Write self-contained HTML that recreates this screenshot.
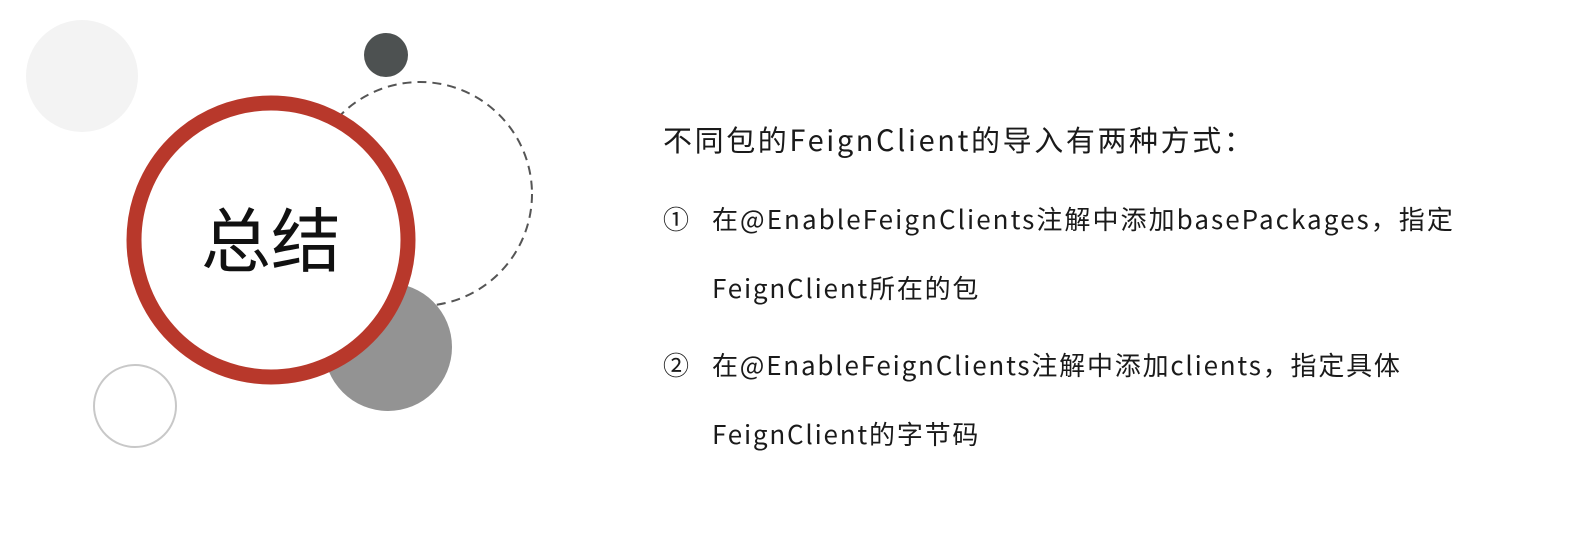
<!DOCTYPE html>
<html><head><meta charset="utf-8"><style>
html,body{margin:0;padding:0;width:1573px;height:543px;background:#fff;overflow:hidden;font-family:"Noto Sans CJK SC","Liberation Sans",sans-serif;color:#1a1a1a}
.t{position:absolute;white-space:nowrap;font-size:26px;line-height:32px;letter-spacing:1.8px}
.n{position:absolute;font-size:26px;line-height:32px}
</style></head><body>
<svg width="1573" height="543" style="position:absolute;left:0;top:0">
<circle cx="82" cy="76" r="56" fill="#f3f3f3"/>
<circle cx="386" cy="55" r="22" fill="#4d5151"/>
<circle cx="420" cy="194" r="112" fill="none" stroke="#555" stroke-width="2" stroke-dasharray="9 6"/>
<circle cx="388" cy="347" r="64" fill="#939393"/>
<circle cx="135" cy="406" r="41" fill="none" stroke="#c8c8c8" stroke-width="2"/>
<circle cx="271" cy="240" r="137" fill="#fff" stroke="#b8382b" stroke-width="15"/>
<text x="271" y="266" font-size="70" text-anchor="middle" fill="#111" font-family="Noto Sans CJK SC, sans-serif">总结</text>
</svg>
<div class="t" style="left:663px;top:123px;font-size:29px;letter-spacing:2.6px">不同包的FeignClient的导入有两种方式：</div>
<div class="n" style="left:663px;top:203px">①</div>
<div class="t" style="left:712px;top:203px;letter-spacing:2.05px">在@EnableFeignClients注解中添加basePackages，指定</div>
<div class="t" style="left:712px;top:272px">FeignClient所在的包</div>
<div class="n" style="left:663px;top:349px">②</div>
<div class="t" style="left:712px;top:349px">在@EnableFeignClients注解中添加clients，指定具体</div>
<div class="t" style="left:712px;top:418px">FeignClient的字节码</div>
</body></html>
